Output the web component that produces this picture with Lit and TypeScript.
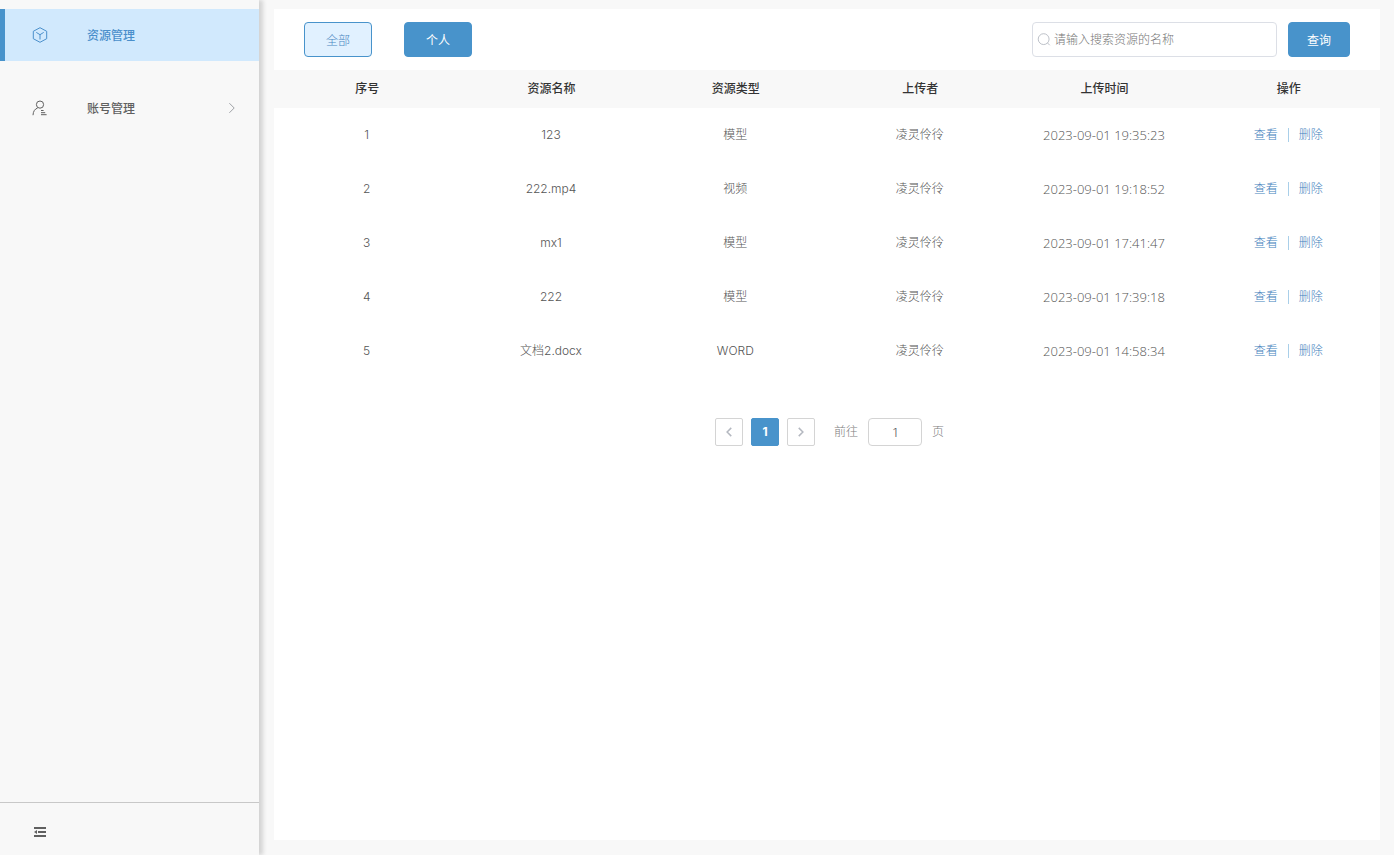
import { LitElement, html, css, svg } from "lit";
import { customElement, state } from "lit/decorators.js";
import { classMap } from "lit/directives/class-map.js";

interface Resource {
  name: string;
  type: string;
  owner: string;
  time: string;
}

const RESOURCES: Resource[] = [
  { name: "123", type: "模型", owner: "凌灵伶彾", time: "2023-09-01 19:35:23" },
  { name: "222.mp4", type: "视频", owner: "凌灵伶彾", time: "2023-09-01 19:18:52" },
  { name: "mx1", type: "模型", owner: "凌灵伶彾", time: "2023-09-01 17:41:47" },
  { name: "222", type: "模型", owner: "凌灵伶彾", time: "2023-09-01 17:39:18" },
  { name: "文档2.docx", type: "WORD", owner: "凌灵伶彾", time: "2023-09-01 14:58:34" },
];

const COLUMNS = ["序号", "资源名称", "资源类型", "上传者", "上传时间", "操作"];

const icon = (size: number, body: unknown, width = 1) => html`<svg
  width=${size}
  height=${size}
  viewBox="0 0 16 16"
  fill="none"
  stroke="currentColor"
  stroke-width=${width}
  aria-hidden="true"
>
  ${body}
</svg>`;

const CUBE = svg`<path d="M8 .7 14.7 4.3v7.4L8 15.3 1.3 11.7V4.3z" stroke-linejoin="round"/><path d="M4.3 5.4 8 7.7l3.7-2.3M8 7.7v4.8"/>`;
const USER = svg`<circle cx="8" cy="4.6" r="3.6"/><path d="M1 15.2c.2-3.9 1.8-6.2 4.6-7.2M9 10.5h2.6M9 12.7h4.2M9 14.7h5.6"/>`;
const RIGHT = svg`<path d="m5 2.5 5.5 5.5L5 13.5"/>`;
const LEFT = svg`<path d="M11 2.5 5.5 8l5.5 5.5"/>`;
const SEARCH = svg`<circle cx="7.6" cy="7" r="6.2"/><path d="m12 11.4 2.6 2.6"/>`;
const FOLD = svg`<path d="M2 4h12M6 8h8M2 12h12"/><path d="M5 6v4L2 8z" fill="currentColor" stroke="none"/>`;

@customElement("side-menu")
export class SideMenu extends LitElement {
  static styles = css`
    :host {
      display: flex;
      flex-direction: column;
      flex: 0 0 259px;
      background: #f8f8f8;
      box-shadow: 4px 0 4px #d4d4d4;
      z-index: 1;
    }
    .menu {
      flex: 1;
      display: flex;
      flex-direction: column;
      gap: 21px;
      padding-top: 9px;
    }
    .item {
      display: flex;
      align-items: center;
      height: 52px;
      box-sizing: border-box;
      padding: 0 20px 0 27px;
      border-left: 5px solid transparent;
      font-size: 12px;
      font-weight: 500;
      color: #606060;
      text-decoration: none;
    }
    .label {
      flex: 1;
      margin-left: 39px;
      padding-top: 2px;
    }
    .active {
      background: #d1e9fd;
      border-color: #4893cb;
      color: #4a8fcb;
    }
    .arrow {
      color: #909399;
    }
    svg {
      display: block;
    }
    .footer {
      display: flex;
      align-items: center;
      height: 53px;
      box-sizing: border-box;
      padding: 6px 32px 0;
      border-top: 1px solid #c8c8c8;
    }
    .fold {
      border: 0;
      padding: 0;
      background: none;
      color: #606060;
      cursor: pointer;
    }
  `;

  render() {
    return html`
      <nav class="menu">
        <a class="item active" href="#resources">
          ${icon(16, CUBE)}<span class="label">资源管理</span>
        </a>
        <a class="item" href="#accounts">
          ${icon(16, USER)}<span class="label">账号管理</span>
          <span class="arrow">${icon(14, RIGHT)}</span>
        </a>
      </nav>
      <div class="footer">
        <button class="fold" aria-label="收起菜单">${icon(16, FOLD, 2)}</button>
      </div>
    `;
  }
}

@customElement("app-root")
export class AppRoot extends LitElement {
  @state() private scope = "全部";

  static styles = css`
    :host {
      display: flex;
      min-height: 100vh;
      background: #f8f8f8;
      font-family: Inter, "Noto Sans CJK SC", sans-serif;
      font-size: 12px;
      font-weight: 300;
      line-height: 18px;
      color: #555;
    }
    .card {
      flex: 1;
      min-width: 0;
      margin: 9px 14px 15px 15px;
      background: #fff;
    }
    .toolbar {
      display: flex;
      align-items: center;
      padding: 13px 30px;
    }
    .scopes {
      display: flex;
      gap: 32px;
      margin-right: auto;
    }
    button,
    input {
      box-sizing: border-box;
      font: inherit;
    }
    button {
      cursor: pointer;
    }
    .btn {
      height: 35px;
      min-width: 62px;
      padding: 3px 12px 0;
      border: 1px solid #4893cb;
      border-radius: 4px;
      background: #4893cb;
      color: #fff;
      font-weight: 400;
    }
    .scope {
      min-width: 68px;
    }
    .plain {
      background: #e1f1ff;
      color: #4c88c2;
      font-weight: 300;
    }
    .search {
      display: flex;
      align-items: center;
      gap: 3px;
      width: 245px;
      height: 35px;
      box-sizing: border-box;
      margin-right: 11px;
      padding: 0 4px;
      border: 1px solid #dcdfe6;
      border-radius: 4px;
      color: #b4b8c0;
    }
    .search svg {
      flex: none;
    }
    .query {
      flex: 1;
      min-width: 0;
      border: 0;
      padding: 1px 0 0;
      outline: 0;
      background: none;
      color: #555;
    }
    .query::placeholder {
      color: #777;
      opacity: 1;
    }
    .table {
      width: 100%;
      table-layout: fixed;
      border-collapse: collapse;
      text-align: center;
    }
    th {
      height: 38px;
      padding: 0 0 0 2px;
      box-sizing: border-box;
      background: #f8f8f8;
      color: #333;
      font-weight: 500;
    }
    td {
      height: 54px;
      padding: 0 0 0 1px;
    }
    .time {
      font-family: "Open Sans", sans-serif;
      font-size: 13px;
    }
    .actions {
      display: flex;
      justify-content: center;
      align-items: center;
      gap: 10px;
    }
    .link {
      color: #4482bd;
      text-decoration: none;
    }
    .rule {
      width: 1px;
      height: 14px;
      background: #a9cfe9;
    }
    .pager {
      display: flex;
      justify-content: center;
      align-items: center;
      gap: 8px;
      padding: 40px 0 40px 5px;
      color: #808080;
    }
    .page {
      display: flex;
      align-items: center;
      justify-content: center;
      width: 28px;
      height: 28px;
      padding: 0;
      border: 1px solid #d4d4d4;
      border-radius: 2px;
      background: #fff;
      color: #b4b8c0;
    }
    .current {
      border-color: #4893cb;
      background: #4893cb;
      color: #fff;
      font-weight: 700;
    }
    .jump {
      display: flex;
      align-items: center;
      gap: 10px;
      margin-left: 11px;
    }
    .number {
      width: 54px;
      height: 28px;
      padding: 0;
      border: 1px solid #d4d4d4;
      border-radius: 4px;
      text-align: center;
      color: #606266;
    }
  `;

  private scopeButton(name: string) {
    return html`<button
      class=${classMap({ btn: true, scope: true, plain: this.scope === name })}
      @click=${() => (this.scope = name)}
    >
      ${name}
    </button>`;
  }

  render() {
    return html`
      <side-menu></side-menu>
      <main class="card">
        <div class="toolbar">
          <div class="scopes">${["全部", "个人"].map((n) => this.scopeButton(n))}</div>
          <label class="search">
            ${icon(14, SEARCH)}
            <input class="query" type="text" aria-label="资源名称" placeholder="请输入搜索资源的名称" />
          </label>
          <button class="btn">查询</button>
        </div>
        <table class="table">
          <thead>
            <tr>
              ${COLUMNS.map((c) => html`<th scope="col">${c}</th>`)}
            </tr>
          </thead>
          <tbody>
            ${RESOURCES.map(
              (r, i) => html`<tr>
                <td>${i + 1}</td>
                <td>${r.name}</td>
                <td>${r.type}</td>
                <td>${r.owner}</td>
                <td><time class="time">${r.time}</time></td>
                <td>
                  <div class="actions">
                    <a class="link" href="#view">查看</a>
                    <span class="rule"></span>
                    <a class="link" href="#delete">删除</a>
                  </div>
                </td>
              </tr>`
            )}
          </tbody>
        </table>
        <div class="pager">
          <button class="page" aria-label="上一页">${icon(12, LEFT, 2)}</button>
          <button class="page current" aria-current="page">1</button>
          <button class="page" aria-label="下一页">${icon(12, RIGHT, 2)}</button>
          <label class="jump">
            <span>前往</span>
            <input class="number" type="text" inputmode="numeric" .value=${"1"} />
            <span>页</span>
          </label>
        </div>
      </main>
    `;
  }
}
